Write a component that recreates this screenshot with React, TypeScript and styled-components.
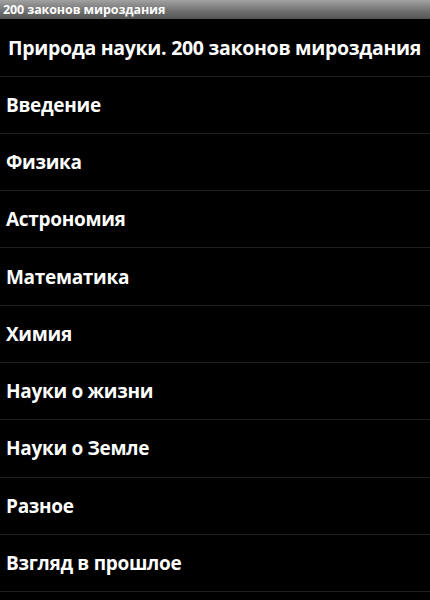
import styled, { createGlobalStyle } from 'styled-components'

const GlobalStyle = createGlobalStyle`
    html, body {
        margin: 0;
        padding: 0;
        background-color: #000000;
    }
    body {
        font-family: 'Open Sans', 'Noto Sans', sans-serif;
    }
`

const Screen = styled.div`
    width: 430px;
    height: 600px;
    overflow: hidden;
    background-color: #000000;
    display: flex;
    flex-direction: column;
`

const TitleBar = styled.div`
    height: 19px;
    flex-shrink: 0;
    display: flex;
    align-items: center;
    padding-left: 3px;
    background: linear-gradient(#a2a2a2, #6e6e6e 60%, #555555);
    color: #ffffff;
    font-size: 12.5px;
    font-weight: 700;
    letter-spacing: -0.1px;
`

const List = styled.ul`
    list-style: none;
    margin: 0;
    padding: 0;
`

const Row = styled.li<{ $first?: boolean }>`
    height: ${p => (p.$first ? '56.5px' : '56.3px')};
    border-bottom: 1px solid #1f1f1f;
    display: flex;
    align-items: center;
    padding-left: ${p => (p.$first ? '8px' : '6px')};
    color: #ffffff;
    font-size: ${p => (p.$first ? '19.5px' : '19px')};
    font-weight: 700;
    letter-spacing: -0.3px;
    white-space: nowrap;
`

const items = [
    'Введение',
    'Физика',
    'Астрономия',
    'Математика',
    'Химия',
    'Науки о жизни',
    'Науки о Земле',
    'Разное',
    'Взгляд в прошлое',
]

export default function App() {
    return (
        <Screen>
            <GlobalStyle />
            <TitleBar>200 законов мироздания</TitleBar>
            <List>
                <Row $first>Природа науки. 200 законов мироздания</Row>
                {items.map(item => <Row key={item}>{item}</Row>)}
            </List>
        </Screen>
    )
}
